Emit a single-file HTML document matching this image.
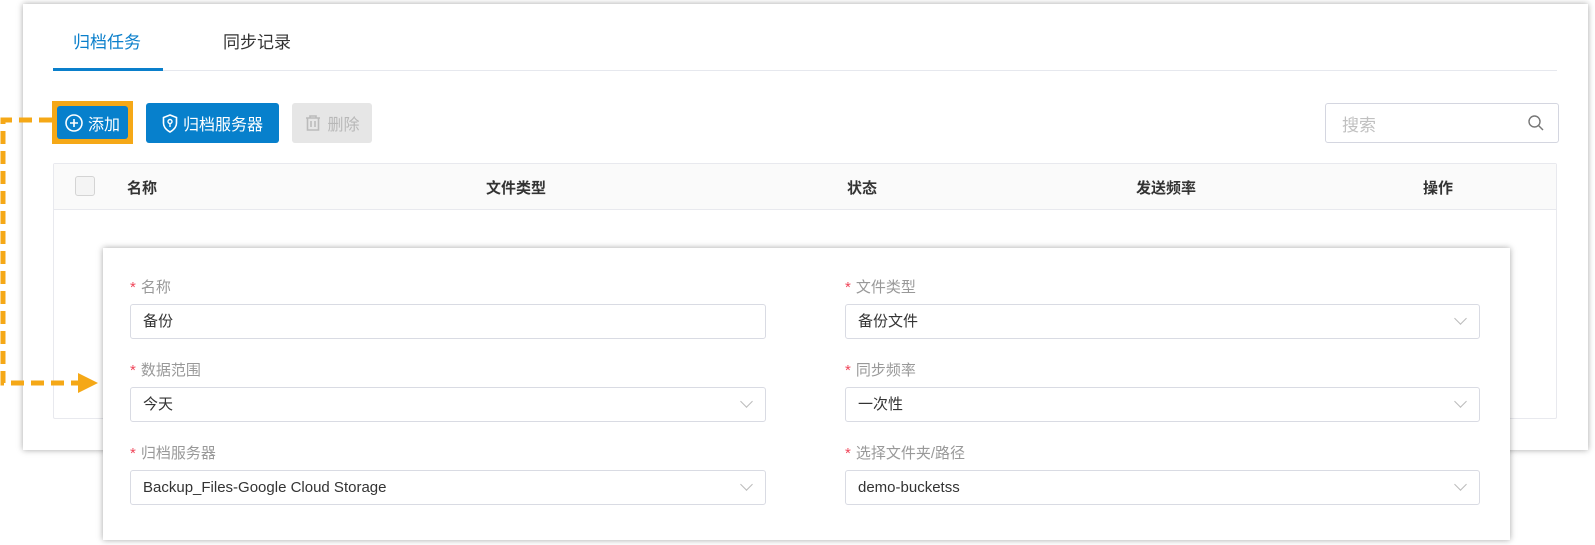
<!DOCTYPE html>
<html><head><meta charset="utf-8"><style>
*{box-sizing:border-box;margin:0;padding:0}
body{width:1595px;height:545px;background:#fff;position:relative;overflow:hidden;font-family:"Liberation Sans","Noto Sans CJK SC",sans-serif;color:#333}
.a{position:absolute}
.panel{left:23px;top:4px;width:1565px;height:446px;background:#fff;box-shadow:0 0 6px rgba(0,0,0,.35)}
.tab{font-size:17px;top:28px}
.btn{border-radius:3px;color:#fff;font-size:16px;display:flex;align-items:center;justify-content:center;gap:5px}
.th{font-size:15px;font-weight:600;color:#333;top:177px}
.card{left:103px;top:248px;width:1407px;height:292px;background:#fff;box-shadow:0 0 6px rgba(0,0,0,.35)}
.lbl{font-size:15px;color:#999}
.lbl b{color:#f0465a;font-weight:normal;margin-right:5px}
.inp{height:35px;border:1px solid #d9dbe3;border-radius:3px;font-size:15px;color:#333;padding-left:12px;line-height:33px}
.chev{position:absolute;right:14px;top:9px;width:9px;height:9px;border-right:1px solid #bbb;border-bottom:1px solid #bbb;transform:rotate(45deg)}
</style></head><body>
<div class="a panel"></div>
<div class="a tab" style="left:73px;color:#0a7fcb">归档任务</div>
<div class="a tab" style="left:223px;color:#333">同步记录</div>
<div class="a" style="left:53px;top:70px;width:1504px;height:1px;background:#e6e8ee"></div>
<div class="a" style="left:53px;top:68px;width:110px;height:3px;background:#0a7fcb"></div>

<div class="a" style="left:52px;top:101px;width:81px;height:43px;background:#f5a817"></div>
<div class="a btn" style="left:57px;top:106px;width:71px;height:33px;background:#0780cc"><svg width="18" height="18" viewBox="0 0 18 18"><circle cx="9" cy="9" r="8" fill="none" stroke="#fff" stroke-width="1.6"/><path d="M9 5v8M5 9h8" stroke="#fff" stroke-width="1.6"/></svg>添加</div>
<div class="a btn" style="left:146px;top:103px;width:133px;height:40px;background:#0780cc"><svg width="16" height="19" viewBox="0 0 16 19"><path d="M8 1L1.5 3.5V9c0 4 3 7 6.5 9 3.5-2 6.5-5 6.5-9V3.5z" fill="none" stroke="#fff" stroke-width="1.6"/><circle cx="8" cy="7.5" r="2" fill="none" stroke="#fff" stroke-width="1.4"/><path d="M8 9.5v3.5" stroke="#fff" stroke-width="1.4"/></svg>归档服务器</div>
<div class="a btn" style="left:292px;top:103px;width:80px;height:40px;background:#e6e6e6;color:#b8b8b8"><svg width="18" height="18" viewBox="0 0 18 18"><path d="M2 4h14M6 4V2h6v2M3.5 4v12h11V4M7 7v6M11 7v6" fill="none" stroke="#bbb" stroke-width="1.6"/></svg>删除</div>

<div class="a" style="left:1325px;top:103px;width:234px;height:40px;border:1px solid #d4d6e0;border-radius:3px"></div>
<div class="a" style="left:1342px;top:111px;font-size:17px;color:#c0c0c0">搜索</div>
<svg class="a" style="left:1527px;top:114px" width="18" height="18" viewBox="0 0 18 18"><circle cx="7.5" cy="7.5" r="5.5" fill="none" stroke="#777" stroke-width="1.4"/><path d="M11.5 11.5l4.5 4.5" stroke="#777" stroke-width="1.4"/></svg>

<div class="a" style="left:53px;top:163px;width:1504px;height:256px;border:1px solid #e8e9ee;border-radius:2px"></div>
<div class="a" style="left:54px;top:164px;width:1502px;height:46px;background:#fafafa;border-bottom:1px solid #e8e9ee"></div>
<div class="a" style="left:75px;top:176px;width:20px;height:20px;border:1px solid #d4d4d4;border-radius:3px;background:#f4f4f4"></div>
<div class="a th" style="left:127px">名称</div>
<div class="a th" style="left:486px">文件类型</div>
<div class="a th" style="left:847px">状态</div>
<div class="a th" style="left:1136px">发送频率</div>
<div class="a th" style="left:1423px">操作</div>

<div class="a card"></div>
<div class="a lbl" style="left:130px;top:276px"><b>*</b>名称</div>
<div class="a inp" style="left:130px;top:304px;width:636px">备份</div>
<div class="a lbl" style="left:845px;top:276px"><b>*</b>文件类型</div>
<div class="a inp" style="left:845px;top:304px;width:635px">备份文件<span class="chev"></span></div>
<div class="a lbl" style="left:130px;top:359px"><b>*</b>数据范围</div>
<div class="a inp" style="left:130px;top:387px;width:636px">今天<span class="chev"></span></div>
<div class="a lbl" style="left:845px;top:359px"><b>*</b>同步频率</div>
<div class="a inp" style="left:845px;top:387px;width:635px">一次性<span class="chev"></span></div>
<div class="a lbl" style="left:130px;top:442px"><b>*</b>归档服务器</div>
<div class="a inp" style="left:130px;top:470px;width:636px">Backup_Files-Google Cloud Storage<span class="chev"></span></div>
<div class="a lbl" style="left:845px;top:442px"><b>*</b>选择文件夹/路径</div>
<div class="a inp" style="left:845px;top:470px;width:635px">demo-bucketss<span class="chev"></span></div>

<svg class="a" style="left:0;top:0" width="110" height="400">
<path d="M52 120H3V383H80" fill="none" stroke="#f5a817" stroke-width="5" stroke-dasharray="13 7"/>
<path d="M78 373L98 383L78 393Z" fill="#f5a817"/>
</svg>
</body></html>
